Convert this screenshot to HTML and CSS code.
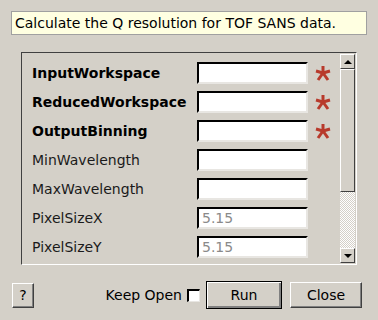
FILE: index.html
```html
<!DOCTYPE html>
<html lang="en">
<head>
  <meta charset="UTF-8" />
  <title>Algorithm dialog</title>
  <link rel="stylesheet" href="styles.css">
</head>
<body>
  <div class="dialog">
    <div class="desc">Calculate the Q resolution for TOF SANS data.</div>

    <div class="panel">
      <div class="props">
        <div class="row">
          <span class="label bold">InputWorkspace</span>
          <span class="field"></span>
          <svg class="star" viewBox="0 0 16 16"><g stroke="#b83a2c" stroke-width="3" stroke-linecap="butt"><line x1="8" y1="8" x2="8" y2="1"/><line x1="8" y1="8" x2="15" y2="6"/><line x1="8" y1="8" x2="13" y2="15"/><line x1="8" y1="8" x2="3" y2="15"/><line x1="8" y1="8" x2="1" y2="6"/></g></svg>
        </div>
        <div class="row">
          <span class="label bold">ReducedWorkspace</span>
          <span class="field"></span>
          <svg class="star" viewBox="0 0 16 16"><g stroke="#b83a2c" stroke-width="3" stroke-linecap="butt"><line x1="8" y1="8" x2="8" y2="1"/><line x1="8" y1="8" x2="15" y2="6"/><line x1="8" y1="8" x2="13" y2="15"/><line x1="8" y1="8" x2="3" y2="15"/><line x1="8" y1="8" x2="1" y2="6"/></g></svg>
        </div>
        <div class="row">
          <span class="label bold">OutputBinning</span>
          <span class="field"></span>
          <svg class="star" viewBox="0 0 16 16"><g stroke="#b83a2c" stroke-width="3" stroke-linecap="butt"><line x1="8" y1="8" x2="8" y2="1"/><line x1="8" y1="8" x2="15" y2="6"/><line x1="8" y1="8" x2="13" y2="15"/><line x1="8" y1="8" x2="3" y2="15"/><line x1="8" y1="8" x2="1" y2="6"/></g></svg>
        </div>
        <div class="row">
          <span class="label">MinWavelength</span>
          <span class="field"></span>
        </div>
        <div class="row">
          <span class="label">MaxWavelength</span>
          <span class="field"></span>
        </div>
        <div class="row">
          <span class="label">PixelSizeX</span>
          <span class="field hint">5.15</span>
        </div>
        <div class="row">
          <span class="label">PixelSizeY</span>
          <span class="field hint">5.15</span>
        </div>
      </div>
      <div class="scrollbar">
        <div class="arrow up"></div>
        <div class="thumb"></div>
        <div class="track"></div>
        <div class="arrow down"></div>
      </div>
    </div>

    <div class="footer">
      <button class="btn help">?</button>
      <span class="spacer"></span>
      <label class="keep">Keep Open <span class="check"></span></label>
      <button class="btn run">Run</button>
      <button class="btn close">Close</button>
    </div>
  </div>
</body>
</html>
```

FILE: styles.css
```css
* {
  box-sizing: border-box;
  margin: 0;
  padding: 0;
}
body {
  background: #d4d0c8;
  font-family: 'DejaVu Sans', sans-serif;
  font-size: 14px;
  color: #000;
}
.dialog {
  width: 378px;
  height: 320px;
  padding: 11px 0 0 11px;
}
.desc {
  width: 356px;
  height: 24px;
  background: #ffffe1;
  border: 1px solid #a0a0a0;
  padding-left: 3px;
  line-height: 22px;
}
.panel {
  display: flex;
  width: 336px;
  height: 213px;
  margin: 17px 0 0 10px;
  border: 1px solid;
  border-color: #404040 #fff #fff #404040;
  overflow: hidden;
}
.props {
  flex: 1;
  display: flex;
  flex-direction: column;
  gap: 7px;
  padding: 9px 0 0 10px;
}
.row {
  display: flex;
  align-items: center;
  height: 22px;
}
.label {
  width: 165px;
  color: #1a1a1a;
}
.label.bold {
  font-weight: bold;
  color: #000;
}
.field {
  width: 111px;
  height: 22px;
  background: #fff;
  border-top: 2px solid #000;
  border-left: 2px solid #000;
  border-bottom: 2px solid #e8e6e2;
  border-right: 2px solid #e8e6e2;
  padding-left: 3px;
  line-height: 18px;
}
.field.hint {
  color: #8a8a8a;
}
.star {
  width: 16px;
  height: 16px;
  margin-left: 7px;
}
.scrollbar {
  width: 16px;
  padding: 1px 1px 1px 0;
  display: flex;
  flex-direction: column;
}
.arrow {
  height: 15px;
  background: #d4d0c8;
  border: 1px solid;
  border-color: #fff #404040 #404040 #fff;
  position: relative;
}
.arrow::after {
  content: "";
  position: absolute;
  left: 3px;
  top: 5px;
  border-left: 4px solid transparent;
  border-right: 4px solid transparent;
}
.arrow.up::after {
  border-bottom: 4px solid #000;
}
.arrow.down::after {
  border-top: 4px solid #000;
}
.thumb {
  height: 123px;
  background: #d4d0c8;
  border: 1px solid;
  border-color: #fff #404040 #404040 #fff;
}
.track {
  flex: 1;
  background: repeating-conic-gradient(#fff 0 25%, #d4d0c8 0 50%) 0 0 / 2px 2px;
}
.footer {
  display: flex;
  align-items: center;
  width: 351px;
  margin-top: 16px;
  padding-left: 1px;
}
.spacer {
  flex: 1;
}
.btn {
  font-family: 'DejaVu Sans', sans-serif;
  font-size: 14px;
  color: #000;
  background: #d4d0c8;
  border: 1px solid;
  border-color: #fff #404040 #404040 #fff;
  box-shadow: inset -1px -1px 0 #808080;
}
.help {
  width: 22px;
  height: 25px;
}
.keep {
  display: flex;
  align-items: center;
  gap: 5px;
  margin-right: 6px;
}
.check {
  width: 13px;
  height: 13px;
  background: #fff;
  border-top: 2px solid #000;
  border-left: 2px solid #000;
  border-bottom: 1px solid #e8e6e2;
  border-right: 1px solid #e8e6e2;
}
.run {
  width: 76px;
  height: 28px;
  border: 1px solid #000;
  box-shadow: inset 1px 1px 0 #fff, inset -2px -2px 0 #808080;
}
.close {
  width: 72px;
  height: 26px;
  margin-left: 8px;
}
```
